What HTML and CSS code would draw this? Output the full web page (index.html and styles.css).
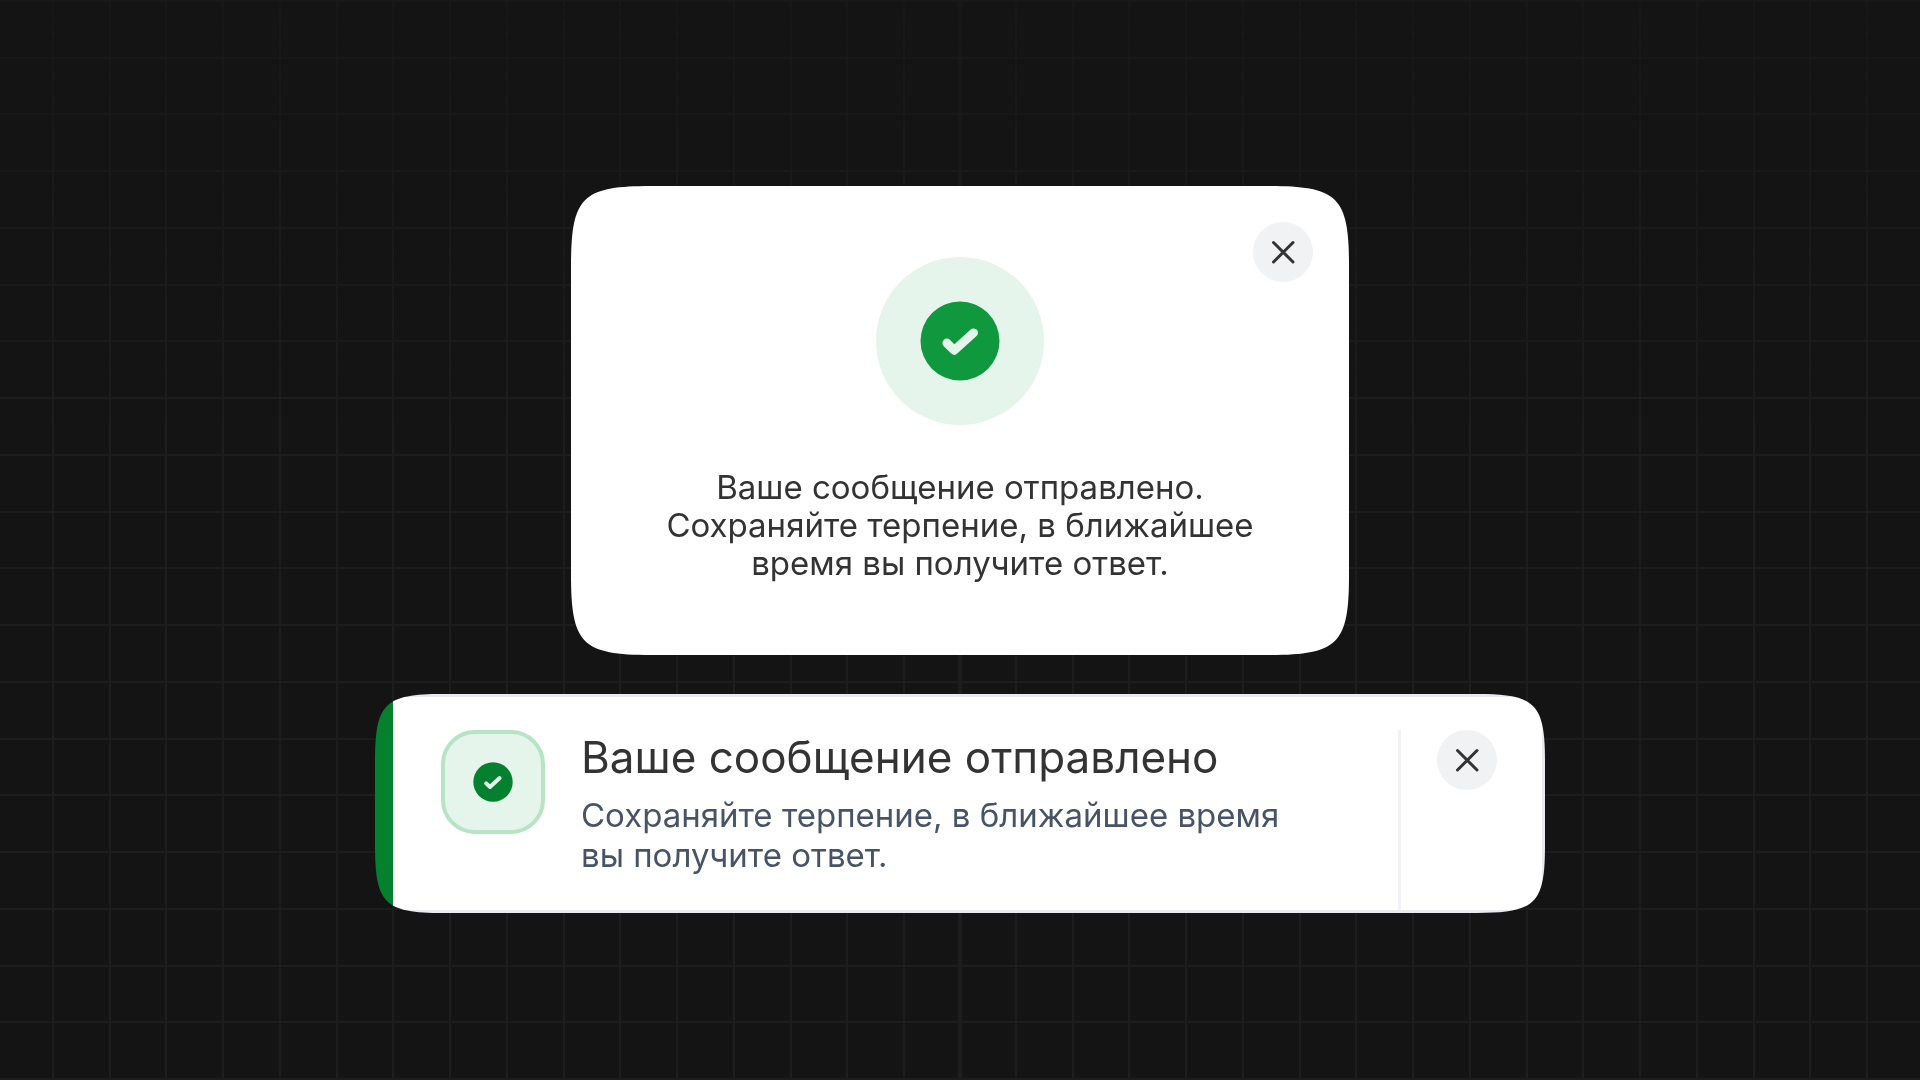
FILE: index.html
```
<!DOCTYPE html>
<html lang="ru">
<head>
<meta charset="utf-8">
<meta name="viewport" content="width=device-width, initial-scale=1">
<title>Сообщение отправлено</title>
<link rel="stylesheet" href="styles.css">
</head>
<body>
<div class="backdrop" aria-hidden="true">
  <div class="backdrop-half backdrop-left"></div>
  <div class="backdrop-half backdrop-right"></div>
</div>
<main class="stage">
  <section class="modal" role="dialog" aria-labelledby="modal-text">
    <button class="close modal-close" type="button" aria-label="Закрыть">
      <svg viewBox="0 0 60 60" aria-hidden="true"><path d="M20.5 20.5 40 40M40 20.5 20.5 40"/></svg>
    </button>
    <svg class="modal-icon" viewBox="0 0 168 168" aria-hidden="true">
      <circle cx="84" cy="84" r="84" fill="#e5f5eb"/>
      <circle cx="84" cy="84" r="39.5" fill="#10983e"/>
      <path d="M70.8 86 78.3 93.3 97.6 75.8" fill="none" stroke="#e5f5eb" stroke-width="8.8" stroke-linecap="round" stroke-linejoin="round"/>
    </svg>
    <p class="modal-text" id="modal-text">Ваше сообщение отправлено. Сохраняйте терпение, в ближайшее время вы получите ответ.</p>
  </section>

  <section class="toast" role="status">
    <div class="toast-icon">
      <svg viewBox="0 0 40 40" aria-hidden="true">
        <circle cx="20" cy="20" r="19.7" fill="#05802e"/>
        <path d="M13.2 21.4 17 25 26.6 16" fill="none" stroke="#e5f5eb" stroke-width="4" stroke-linecap="round" stroke-linejoin="round"/>
      </svg>
    </div>
    <div class="toast-body">
      <h2 class="toast-title">Ваше сообщение отправлено</h2>
      <p class="toast-text">Сохраняйте терпение, в ближайшее время вы получите ответ.</p>
    </div>
    <div class="toast-actions">
      <button class="close" type="button" aria-label="Закрыть">
        <svg viewBox="0 0 60 60" aria-hidden="true"><path d="M20.5 20.5 40 40M40 20.5 20.5 40"/></svg>
      </button>
    </div>
  </section>
</main>
</body>
</html>
```
FILE: styles.css
```
:root {
  --ink: #333;
  --line: #1d1d1d;
  --squircle: url("data:image/svg+xml,%3Csvg xmlns='http://www.w3.org/2000/svg' width='200' height='200' viewBox='0 0 200 200'%3E%3Cpath d='M0 80C0 11 11 0 80 0H120C189 0 200 11 200 80V120C200 189 189 200 120 200H80C11 200 0 189 0 120Z'/%3E%3C/svg%3E");
}

* { box-sizing: border-box; }

body {
  margin: 0;
  min-height: 100vh;
  background: #141414;
  color: var(--ink);
  font-family: Inter, "Noto Sans", sans-serif;
}

/* Grid backdrop: two mirrored halves, fading towards the top */
.backdrop {
  position: fixed;
  inset: 0;
  z-index: -1;
  display: flex;
  mask-image: linear-gradient(rgb(0 0 0 / 0.4), #000 40%);
}

.backdrop-half {
  --stops: transparent 55px, var(--line) 55px 57px, transparent 57px 112px, var(--line) 112px 114px, transparent 114px 168px, var(--line) 168px 170px, transparent 170px 225px, var(--line) 225px;
  --rows: linear-gradient(var(--line) 2px, transparent 2px 57px, var(--line) 57px 59px, transparent 59px 113px, var(--line) 113px 115px, transparent 115px 170px, var(--line) 170px 172px, transparent 172px);
  flex: 1;
}

.backdrop-left {
  border-right: 2px solid var(--line);
  background: linear-gradient(to left, var(--stops)) right top / 227px 227px border-box, var(--rows) right top / 227px 227px border-box;
}

.backdrop-right {
  border-left: 2px solid var(--line);
  background: linear-gradient(to right, var(--stops)) left top / 227px 227px border-box, var(--rows) left top / 227px 227px border-box;
}

.stage {
  display: flex;
  flex-direction: column;
  align-items: center;
  gap: 39px;
  padding: 186px 24px 48px;
}

.modal {
  position: relative;
  display: flex;
  flex-direction: column;
  align-items: center;
  gap: 43px;
  width: 100%;
  max-width: 778px;
  padding: 71px 80px 73px;
  background: #fff;
  -webkit-mask-box-image: var(--squircle) 80 fill / 80px stretch;
}

.modal-icon { width: 168px; height: 168px; }

.modal-text {
  max-width: 616px;
  margin: 0;
  font-size: 33px;
  line-height: 38px;
  text-align: center;
}

.close {
  display: block;
  width: 60px;
  height: 60px;
  padding: 0;
  border: 0;
  border-radius: 50%;
  background: #f1f2f4;
  color: var(--ink);
  cursor: pointer;
}

.close svg {
  display: block;
  fill: none;
  stroke: currentColor;
  stroke-width: 3;
  stroke-linecap: round;
}

.modal-close {
  position: absolute;
  top: 36px;
  right: 36px;
}

.toast {
  display: flex;
  gap: 36px;
  width: 100%;
  max-width: 1170px;
  padding: 33px 45px 0 48px;
  border: 3px solid #e8eaef;
  border-left: 18px solid #05802e;
  background: #fff;
  -webkit-mask-box-image: var(--squircle) 80 fill / 68px stretch;
}

.toast-icon {
  display: grid;
  place-items: center;
  flex: none;
  width: 104px;
  height: 104px;
  border: 4px solid #b6e4c5;
  border-radius: 34px;
  background: #e5f5eb;
}

.toast-icon svg { width: 40px; height: 40px; }

.toast-body {
  flex: 1;
  padding-bottom: 35px;
}

.toast-title {
  margin: 0 0 11px;
  font-size: 44px;
  font-weight: 400;
  line-height: 54px;
}

.toast-text {
  max-width: 740px;
  margin: 0;
  color: #475467;
  font-size: 33px;
  line-height: 40px;
}

.toast-actions {
  padding-left: 36px;
  border-left: 3px solid #f1f2f6;
}
```
